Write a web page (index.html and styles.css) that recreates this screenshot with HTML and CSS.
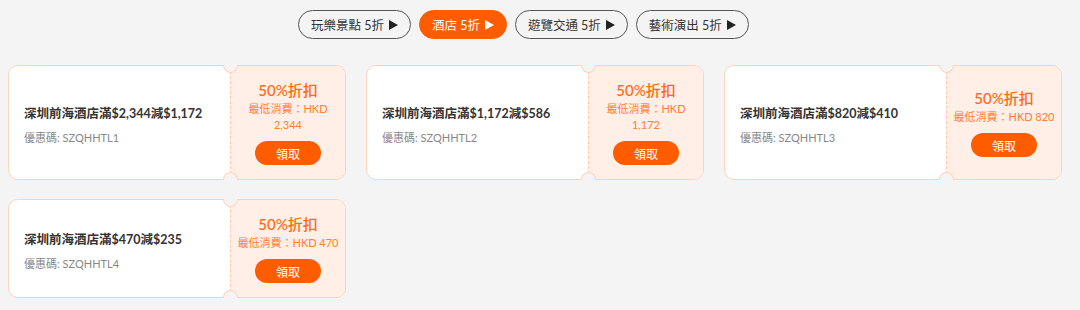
FILE: index.html
```html
<!DOCTYPE html>
<html lang="zh-Hant">
<head>
    <meta charset="UTF-8">
    <meta name="viewport" content="width=device-width, initial-scale=1.0">
    <title>酒店優惠券</title>
    <link rel="stylesheet" href="styles.css">
</head>
<body>
    <div class="tabs">
        <button class="tab">玩樂景點 5折<svg class="arrow" viewBox="0 0 9 10"><polygon points="0,0 9,5 0,10"/></svg></button>
        <button class="tab active">酒店 5折<svg class="arrow" viewBox="0 0 9 10"><polygon points="0,0 9,5 0,10"/></svg></button>
        <button class="tab">遊覽交通 5折<svg class="arrow" viewBox="0 0 9 10"><polygon points="0,0 9,5 0,10"/></svg></button>
        <button class="tab">藝術演出 5折<svg class="arrow" viewBox="0 0 9 10"><polygon points="0,0 9,5 0,10"/></svg></button>
    </div>

    <div class="coupons">
        <div class="coupon">
            <div class="coupon-main">
                <div class="coupon-title">深圳前海酒店滿$2,344減$1,172</div>
                <div class="coupon-code">優惠碼: SZQHHTL1</div>
            </div>
            <div class="coupon-stub">
                <div class="discount">50%折扣</div>
                <div class="min-spend">最低消費：HKD 2,344</div>
                <button class="claim">領取</button>
            </div>
        </div>

        <div class="coupon">
            <div class="coupon-main">
                <div class="coupon-title">深圳前海酒店滿$1,172減$586</div>
                <div class="coupon-code">優惠碼: SZQHHTL2</div>
            </div>
            <div class="coupon-stub">
                <div class="discount">50%折扣</div>
                <div class="min-spend">最低消費：HKD 1,172</div>
                <button class="claim">領取</button>
            </div>
        </div>

        <div class="coupon">
            <div class="coupon-main">
                <div class="coupon-title">深圳前海酒店滿$820減$410</div>
                <div class="coupon-code">優惠碼: SZQHHTL3</div>
            </div>
            <div class="coupon-stub">
                <div class="discount">50%折扣</div>
                <div class="min-spend">最低消費：HKD 820</div>
                <button class="claim">領取</button>
            </div>
        </div>

        <div class="coupon">
            <div class="coupon-main">
                <div class="coupon-title">深圳前海酒店滿$470減$235</div>
                <div class="coupon-code">優惠碼: SZQHHTL4</div>
            </div>
            <div class="coupon-stub">
                <div class="discount">50%折扣</div>
                <div class="min-spend">最低消費：HKD 470</div>
                <button class="claim">領取</button>
            </div>
        </div>
    </div>
</body>
</html>
```

FILE: styles.css
```css
body {
    margin: 0;
    padding: 10px 8px;
    background: #f4f4f4;
    font-family: Lato, "Noto Sans CJK TC", sans-serif;
    color: #333;
}

.tabs {
    display: flex;
    gap: 8px;
    padding-left: 290px;
    margin-bottom: 26px;
}

.tab {
    display: flex;
    align-items: center;
    height: 29px;
    padding: 0 12px;
    border: 1px solid #555;
    border-radius: 15px;
    background: transparent;
    color: #333;
    font-family: inherit;
    font-size: 12.5px;
    cursor: pointer;
}

.tab.active {
    background: #ff5c00;
    border-color: #ff5c00;
    color: #fff;
}

.arrow {
    width: 9px;
    height: 10px;
    margin-left: 5px;
    fill: #222;
}

.tab.active .arrow {
    fill: #fff;
}

.coupons {
    display: grid;
    grid-template-columns: repeat(3, 338px);
    column-gap: 20px;
    row-gap: 19px;
}

.coupon {
    display: flex;
    background: #fff;
    border: 1px solid #ffd3bb;
    border-radius: 10px;
}

.coupon-main {
    flex: 1;
    display: flex;
    flex-direction: column;
    justify-content: center;
    padding: 6px 15px 0;
}

.coupon-title {
    font-size: 12.5px;
    font-weight: 700;
    line-height: 18px;
    color: #333;
    margin-bottom: 7px;
}

.coupon-code {
    font-size: 11px;
    line-height: 16px;
    color: #888;
}

.coupon-stub {
    position: relative;
    width: 115px;
    display: flex;
    flex-direction: column;
    align-items: center;
    justify-content: center;
    padding: 14px 4px;
    box-sizing: border-box;
    background: #ffefe6;
    border-left: 1px dashed #ffc9ab;
    border-radius: 0 9px 9px 0;
    text-align: center;
}

.coupon-stub::before,
.coupon-stub::after {
    content: "";
    position: absolute;
    left: -8px;
    width: 13px;
    height: 7px;
    background: #f4f4f4;
    border: 1px solid #ffd3bb;
}

.coupon-stub::before {
    top: -1px;
    border-top: none;
    border-radius: 0 0 8px 8px;
}

.coupon-stub::after {
    bottom: -1px;
    border-bottom: none;
    border-radius: 8px 8px 0 0;
}

.discount {
    font-size: 15px;
    font-weight: 500;
    line-height: 21px;
    color: #ff6a14;
}

.min-spend {
    font-size: 11px;
    line-height: 16px;
    color: #ff7d3a;
}

.claim {
    width: 66px;
    height: 24px;
    margin-top: 8px;
    border: none;
    border-radius: 12px;
    background: #ff5c00;
    color: #fff;
    font-family: inherit;
    font-size: 12px;
    cursor: pointer;
}
```
